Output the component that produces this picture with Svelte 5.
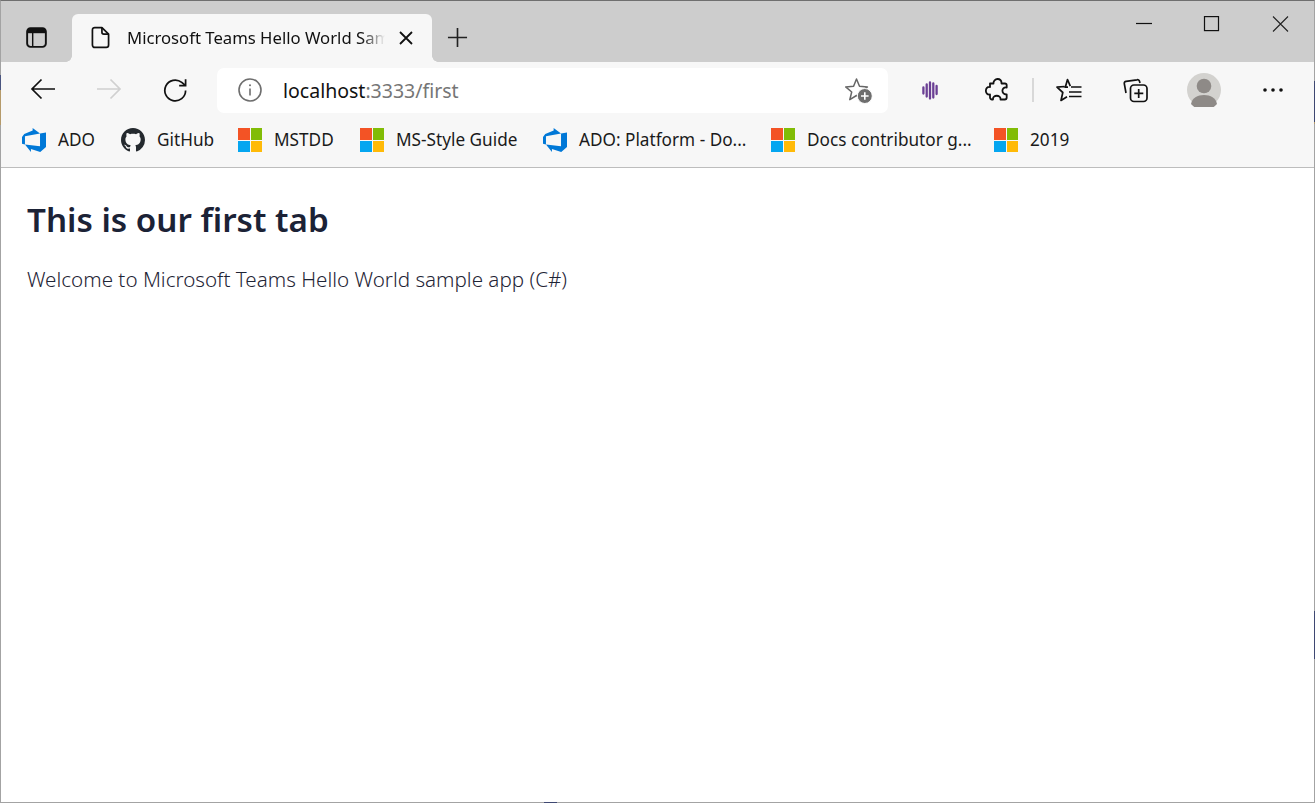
<script>
  const bookmarks = [
    { icon: 'ado', label: 'ADO', width: 38 },
    { icon: 'github', label: 'GitHub', width: 56 },
    { icon: 'ms', label: 'MSTDD', width: 61 },
    { icon: 'ms', label: 'MS-Style Guide', width: 122 },
    { icon: 'ado', label: 'ADO: Platform - Do...', width: 167 },
    { icon: 'ms', label: 'Docs contributor g...', width: 162 },
    { icon: 'ms', label: '2019', width: 39 }
  ];
</script>

<div class="window">
  <div class="titlebar">
    <button class="tab-actions" aria-label="Tab actions">
      <svg width="21" height="21" viewBox="0 0 22 22" fill="none" stroke="#111" stroke-width="2">
        <rect x="1.2" y="1.2" width="19.6" height="19.6" rx="3.5" />
        <path d="M7 6v14.5" stroke-width="1.5" />
        <path d="M2 2h18v4.5H2z" fill="#111" stroke="none" />
      </svg>
    </button>
    <div class="tab">
      <svg class="tab-doc" width="19" height="23" viewBox="0 0 20 24" fill="none" stroke="#111" stroke-width="1.8" stroke-linejoin="round">
        <path d="M4 1.500h7.500l7 7V20a2.500 2.500 0 0 1-2.500 2.500H4A2.500 2.500 0 0 1 1.500 20V4A2.500 2.500 0 0 1 4 1.500z" />
        <path d="M11.500 1.500V6.500a2 2 0 0 0 2 2h5" />
      </svg>
      <span class="tab-title">Microsoft Teams Hello World Sample App</span>
      <svg class="tab-close" width="14" height="14" viewBox="0 0 14 14" stroke="#111" stroke-width="1.8">
        <path d="M1 1l12 12M13 1L1 13" />
      </svg>
    </div>
    <button class="new-tab" aria-label="New tab">
      <svg width="21" height="21" viewBox="0 0 22 22" stroke="#222" stroke-width="1.700">
        <path d="M11 1v20M1 11h20" />
      </svg>
    </button>
    <div class="window-controls">
      <svg width="68" height="16" viewBox="0 0 68 16" stroke="#111" stroke-width="1.2">
        <path d="M26 7.500h16" />
      </svg>
      <svg width="68" height="16" viewBox="0 0 68 16" fill="none" stroke="#111" stroke-width="1.200">
        <rect x="26.500" y="0.600" width="14" height="14" />
      </svg>
      <svg width="68" height="16" viewBox="0 0 68 16" stroke="#222" stroke-width="1.100">
        <path d="M27 0.500l15 15M42 0.500l-15 15" />
      </svg>
    </div>
  </div>

  <div class="toolbar">
    <button class="tool raised" aria-label="Back">
      <svg width="26" height="22" viewBox="0 0 26 22" fill="none" stroke="#111" stroke-width="1.700">
        <path d="M25 11H2M11.500 1.500L2 11l9.500 9.500" />
      </svg>
    </button>
    <button class="tool raised" aria-label="Forward">
      <svg width="26" height="22" viewBox="0 0 26 22" fill="none" stroke="#d0d0d0" stroke-width="1.700">
        <path d="M1 11h23M14.500 1.500L24 11l-9.500 9.500" />
      </svg>
    </button>
    <button class="tool" aria-label="Refresh">
      <svg width="25" height="25" viewBox="0 0 26 26" fill="none" stroke="#111" stroke-width="1.800">
        <path d="M23.500 13A10.800 10.800 0 1 1 19.500 4.600L23 7.500" />
        <path d="M23.500 1.200V8h-6.700" />
      </svg>
    </button>

    <div class="address">
      <svg class="info" width="24" height="24" viewBox="0 0 24 24" fill="none" stroke="#6e6e6e" stroke-width="1.600">
        <circle cx="12" cy="12" r="11" />
        <path d="M12 10.500v7" />
        <circle cx="12" cy="7.200" r="1" fill="#6e6e6e" stroke="none" />
      </svg>
      <span class="url"><span class="host">localhost</span>:3333/first</span>
      <svg class="star-add" width="28" height="27" viewBox="0 0 28 27" fill="none">
        <path d="M11.500 2l3 7.300 7.900.6-6 5.100 1.900 7.700-6.800-4.200-6.700 4.200 1.900-7.700-6-5.100 7.900-.6z" stroke="#666" stroke-width="1.500" stroke-linejoin="round" />
        <circle cx="19.800" cy="19" r="7.500" fill="#6e6e6e" stroke="#fff" stroke-width="1" />
        <path d="M19.800 15.200v7.600M16 19h7.600" stroke="#fff" stroke-width="1.600" />
      </svg>
    </div>

    <div class="tools-right">
      <button class="tool" aria-label="Extension">
        <svg width="16" height="19" viewBox="0 0 16 19" stroke="#6b3f94" stroke-width="2.300" stroke-linecap="round">
          <path d="M1.400 6.500v6M4.700 3.500v12M8 1.500v16M11.300 2.500v14M14.600 5v8" />
        </svg>
      </button>
      <button class="tool puzzle" aria-label="Extensions">
        <svg width="24" height="26" viewBox="0 0 24 26" fill="none" stroke="#111" stroke-width="1.800" stroke-linejoin="round">
          <path d="M5 7.500H8.500C8 2 17 1 16.500 7.500H20a1.700 1.700 0 0 1 1.700 1.700V11.500C16 10.500 16 19 21.700 18.500V21.500a2 2 0 0 1-2 2H15.500C16 18.500 7.500 18.500 8 23.500H7a2 2 0 0 1-2-2V18.500C-.5 19.500-.5 10 5 11z" />
        </svg>
      </button>
      <div class="divider"></div>
      <button class="tool" aria-label="Favorites">
        <svg width="26" height="24" viewBox="0 0 26 24" fill="none" stroke="#111" stroke-width="1.700" stroke-linejoin="round">
          <path d="M12 9.200H9.300L11.500 1.500l2.800 6.700M8.500 8.500l-7.500.7 5.800 5.300-1.800 8 6-3.800" />
          <path d="M15 9h10.500M13 14h12.500M13 18.500h12.500" />
        </svg>
      </button>
      <button class="tool" aria-label="Collections">
        <svg width="25" height="25" viewBox="0 0 25 25" fill="none" stroke="#111" stroke-width="1.700">
          <path d="M17 5l-.5-1.800A2 2 0 0 0 14 1.800L3 3.300a2 2 0 0 0-1.700 2.300l1.700 9.400" />
          <rect x="7.500" y="7" width="16.500" height="16.500" rx="3.500" />
          <path d="M15.700 11v9M11.300 15.300h9" />
        </svg>
      </button>
      <button class="tool" aria-label="Profile">
        <span class="avatar">
          <svg width="34" height="34" viewBox="0 0 34 34">
            <circle cx="17" cy="17" r="17" fill="#d3d2cf" />
            <circle cx="17" cy="13" r="7.300" fill="#8e8a87" />
            <path d="M4 31c1-6 6.500-9 13-9s12 3 13 9a17 17 0 0 1-26 0z" fill="#8e8a87" />
          </svg>
        </span>
      </button>
      <button class="tool more" aria-label="More">
        <svg width="20" height="4" viewBox="0 0 20 4" fill="#111">
          <circle cx="2" cy="2" r="1.800" />
          <circle cx="10" cy="2" r="1.800" />
          <circle cx="18" cy="2" r="1.800" />
        </svg>
      </button>
    </div>
  </div>

  <div class="bookmarks">
    {#each bookmarks as item}
      <div class="bookmark">
        {#if item.icon === 'ado'}
          <svg width="24" height="24" viewBox="0 0 24 24" fill="#0078d7">
            <path d="M0 8.877L2.247 5.910l8.405-3.416V.022l7.370 5.393L2.966 8.338v8.225L0 15.707zm24-4.450v14.651l-5.753 4.900-9.303-3.057v3.056l-5.978-7.416 15.057 1.798V5.415z" />
          </svg>
        {:else if item.icon === 'github'}
          <svg width="24" height="24" viewBox="0 0 16 16" fill="#24292e">
            <path d="M8 0C3.580 0 0 3.580 0 8c0 3.540 2.290 6.530 5.470 7.590.4.070.55-.17.55-.38 0-.19-.01-.82-.01-1.490-2.010.37-2.530-.49-2.690-.94-.09-.23-.48-.94-.82-1.130-.28-.15-.68-.52-.01-.53.63-.01 1.080.58 1.230.82.720 1.210 1.870.87 2.330.66.070-.52.28-.87.51-1.070-1.780-.2-3.640-.89-3.640-3.950 0-.87.31-1.590.82-2.150-.08-.2-.36-1.020.08-2.120 0 0 .67-.21 2.200.82.64-.18 1.320-.27 2-.27.68 0 1.360.09 2 .27 1.530-1.040 2.200-.82 2.200-.82.44 1.100.16 1.920.08 2.120.51.56.82 1.270.82 2.150 0 3.070-1.870 3.750-3.650 3.950.29.25.54.73.54 1.480 0 1.070-.01 1.930-.01 2.200 0 .21.15.46.55.38A8.013 8.013 0 0016 8c0-4.420-3.580-8-8-8z" />
          </svg>
        {:else}
          <span class="ms-logo"><i class="r"></i><i class="g"></i><i class="b"></i><i class="y"></i></span>
        {/if}
        <span class="bookmark-label" style="width: {item.width}px">{item.label}</span>
      </div>
    {/each}
  </div>

  <main class="page">
    <h1>This is our first tab</h1>
    <p>Welcome to Microsoft Teams Hello World sample app (C#)</p>
  </main>

  <!-- desktop showing through at the window edge -->
  <i class="edge-bottom"></i>
</div>

<style>
  :global(body) {
    margin: 0;
    background: #fff;
  }

  .window {
    box-sizing: border-box;
    display: flex;
    flex-direction: column;
    height: 803px;
    position: relative;
    border-left: 1px solid #a3a3a3;
    border-right: 1px solid #a3a3a3;
    border-bottom: 1px solid #a3a3a3;
    border-top: 1px solid #6f6f6f;
    font-family: "Noto Sans", "Open Sans", sans-serif;
    color: #111;
  }

  .window::before,
  .window::after {
    content: "";
    position: absolute;
    top: -1px;
    bottom: -1px;
    width: 1px;
  }

  .window::before {
    left: -1px;
    background: linear-gradient(
      to bottom,
      transparent 75px,
      #4a5580 75px,
      #4a5580 90px,
      #b59a6a 90px,
      #b59a6a 125px,
      transparent 125px
    );
  }

  .window::after {
    right: -1px;
    background: linear-gradient(
      to bottom,
      transparent 81px,
      #3f4872 81px,
      #3f4872 122px,
      #b59a6a 122px,
      #b59a6a 124px,
      transparent 124px,
      transparent 611px,
      #3f4872 611px,
      #3f4872 659px,
      transparent 659px
    );
  }

  .edge-bottom {
    position: absolute;
    left: 543px;
    bottom: -1px;
    width: 13px;
    height: 1px;
    background: #3f4872;
  }

  button {
    padding: 0;
    border: none;
    background: none;
    display: flex;
    align-items: center;
    justify-content: center;
  }

  .titlebar {
    display: flex;
    align-items: flex-start;
    height: 61px;
    flex: none;
    background: #cdcdcd;
  }

  .tab-actions {
    width: 71px;
    height: 47px;
    margin-top: 13px;
  }

  .tab {
    box-sizing: border-box;
    display: flex;
    align-items: center;
    width: 360px;
    height: 48px;
    margin-top: 13px;
    padding: 0 19px;
    background: #f7f7f7;
    border-radius: 6px 6px 0 0;
    position: relative;
  }

  .tab::before,
  .tab::after {
    content: "";
    position: absolute;
    bottom: 0;
    width: 6px;
    height: 6px;
  }

  .tab::before {
    left: -6px;
    background: radial-gradient(circle at 0 0, transparent 5.500px, #f7f7f7 6px);
  }

  .tab::after {
    right: -6px;
    background: radial-gradient(circle at 100% 0, transparent 5.500px, #f7f7f7 6px);
  }

  .tab-doc {
    flex: none;
    margin-bottom: 1px;
  }

  .tab-title {
    width: 260px;
    margin-left: 17px;
    margin-bottom: 1px;
    white-space: nowrap;
    overflow: hidden;
    font-size: 16.700px;
    line-height: 22px;
    color: #111;
    -webkit-mask-image: linear-gradient(to right, #000 235px, transparent 258px);
    mask-image: linear-gradient(to right, #000 235px, transparent 258px);
  }

  .tab-close {
    flex: none;
    margin-left: 13px;
  }

  .new-tab {
    width: 50px;
    height: 47px;
    margin-top: 13px;
  }

  .window-controls {
    display: flex;
    margin-left: auto;
    padding: 15px 0 0;
  }

  .toolbar {
    display: flex;
    align-items: center;
    height: 56px;
    flex: none;
    padding-left: 9px;
    background: #f7f7f7;
  }

  .tool {
    width: 66px;
    height: 44px;
    flex: none;
  }

  .raised svg {
    margin-bottom: 2px;
  }

  .puzzle svg {
    margin-left: 2px;
    margin-bottom: 2px;
  }

  .more svg {
    margin-left: 12px;
    margin-bottom: 1px;
  }

  .address {
    box-sizing: border-box;
    display: flex;
    align-items: center;
    width: 671px;
    height: 45px;
    margin-left: 9px;
    padding: 0 15px 0 21px;
    background: #fff;
    border-radius: 7px;
  }

  .url {
    flex: 1;
    margin-left: 21px;
    font-size: 19.500px;
    color: #767676;
  }

  .host {
    color: #111;
  }

  .star-add {
    flex: none;
  }

  .tools-right {
    display: flex;
    align-items: center;
    margin-left: 9px;
  }

  .divider {
    flex: none;
    width: 2px;
    height: 24px;
    margin: 0 2px 0 3px;
    background: #d8d8d8;
  }

  .avatar {
    display: block;
    width: 34px;
    height: 34px;
    margin-left: 5px;
  }

  .avatar svg {
    display: block;
  }

  .bookmarks {
    display: flex;
    align-items: center;
    gap: 25px;
    height: 44px;
    flex: none;
    padding: 0 0 5px 21px;
    background: #f7f7f7;
    border-bottom: 1px solid #bdbdbd;
  }

  .bookmark {
    display: flex;
    align-items: center;
    gap: 12px;
  }

  .bookmark-label {
    font-size: 17.200px;
    line-height: 24px;
    color: #1a1a1a;
    white-space: nowrap;
  }

  .ms-logo {
    display: grid;
    grid-template-columns: 1fr 1fr;
    gap: 1px;
    width: 24px;
    height: 24px;
  }

  .ms-logo i {
    display: block;
  }

  .r {
    background: #f35325;
  }

  .g {
    background: #81bc06;
  }

  .b {
    background: #05a6f0;
  }

  .y {
    background: #ffba08;
  }

  .page {
    flex: 1;
    padding: 32px 26px 0;
  }

  h1 {
    margin: 0 0 24px;
    font-size: 33.200px;
    line-height: 40px;
    font-weight: 600;
    color: #1b2236;
  }

  p {
    margin: 0;
    font-size: 20.600px;
    line-height: 30px;
    font-weight: 300;
    color: #1f2536;
  }
</style>
